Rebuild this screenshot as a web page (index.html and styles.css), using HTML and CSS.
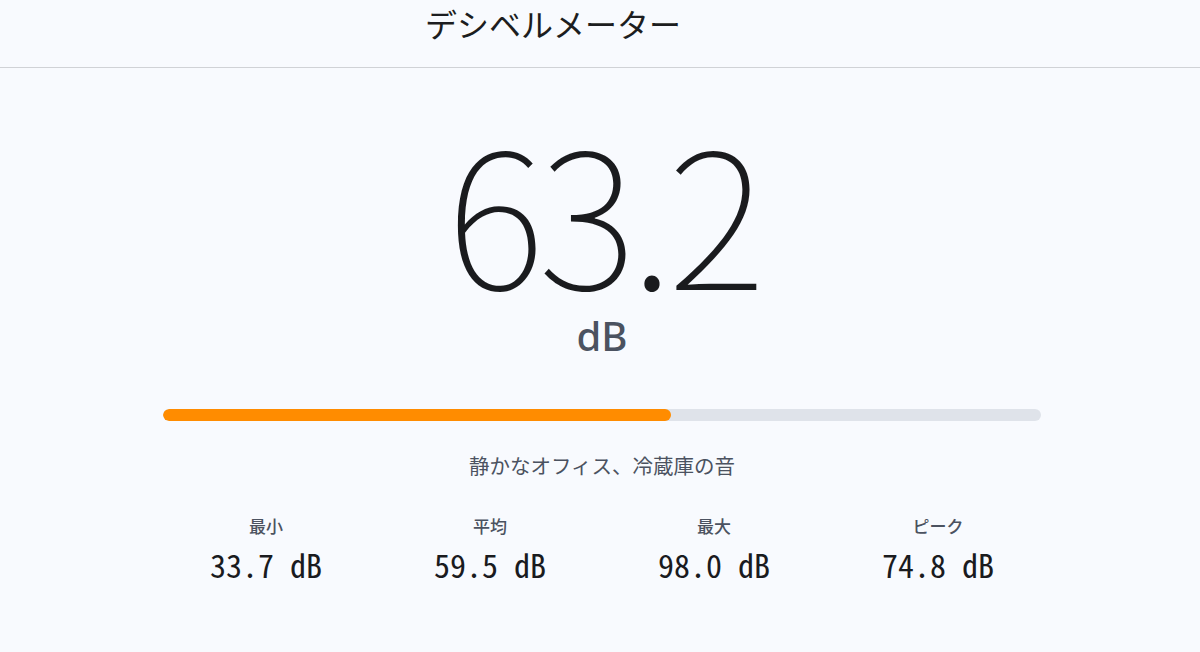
FILE: index.html
```html
<!DOCTYPE html>
<html lang="ja">
<head>
<meta charset="utf-8">
<title>デシベルメーター</title>
<link rel="stylesheet" href="styles.css">
</head>
<body>
<header class="app-header">
  <h1 class="app-title">デシベルメーター</h1>
</header>
<main class="meter">
  <div class="reading">
    <div class="reading-value">63.2</div>
    <div class="reading-unit">dB</div>
  </div>
  <div class="level-bar">
    <div class="level-fill" style="width: 57.9%"></div>
  </div>
  <p class="level-desc">静かなオフィス、冷蔵庫の音</p>
  <div class="stats">
    <div class="stat">
      <div class="stat-label">最小</div>
      <div class="stat-value">33.7 dB</div>
    </div>
    <div class="stat">
      <div class="stat-label">平均</div>
      <div class="stat-value">59.5 dB</div>
    </div>
    <div class="stat">
      <div class="stat-label">最大</div>
      <div class="stat-value">98.0 dB</div>
    </div>
    <div class="stat">
      <div class="stat-label">ピーク</div>
      <div class="stat-value">74.8 dB</div>
    </div>
  </div>
</main>
</body>
</html>
```
FILE: styles.css
```css
* { box-sizing: border-box; }
html, body {
  margin: 0;
  padding: 0;
  background: #f8fafe;
  color: #1f2023;
  font-family: "Noto Sans", "Noto Sans CJK JP", sans-serif;
}
.app-header {
  height: 68px;
  border-bottom: 1px solid #d0d2d6;
  padding-left: 425px;
}
.app-title {
  margin: 0;
  font-family: "Noto Sans CJK JP", sans-serif;
  font-weight: 400;
  font-size: 32px;
  line-height: 46px;
  color: #1c1d20;
}
.meter {
  width: 896px;
  margin: 0 auto;
  position: relative;
  left: 2px;
  display: flex;
  flex-direction: column;
  align-items: center;
}
.reading {
  display: flex;
  flex-direction: column;
  align-items: center;
  margin-top: 40px;
}
.reading-value {
  font-family: "Noto Sans CJK JP", sans-serif;
  font-weight: 100;
  font-size: 188px;
  line-height: 200px;
  letter-spacing: -6px;
  padding-left: 2px;
  color: #1a1b1e;
}
.reading-unit {
  margin-top: 3px;
  font-family: "Noto Sans", sans-serif;
  font-weight: 500;
  font-size: 40px;
  line-height: 50px;
  color: #4b5260;
}
.level-bar {
  align-self: stretch;
  margin: 48px 9px 0;
  height: 12px;
  border-radius: 6px;
  background: #dfe3ea;
  overflow: hidden;
}
.level-fill {
  height: 100%;
  border-radius: 6px;
  background: #ff8c00;
}
.level-desc {
  margin: 30px 0 0;
  font-family: "Noto Sans CJK JP", sans-serif;
  font-size: 20.5px;
  line-height: 28px;
  color: #4b5260;
}
.stats {
  align-self: stretch;
  display: grid;
  grid-template-columns: repeat(4, 1fr);
  margin-top: 35px;
}
.stat {
  display: flex;
  flex-direction: column;
  align-items: center;
}
.stat-label {
  font-family: "Noto Sans CJK JP", sans-serif;
  font-weight: 500;
  font-size: 17px;
  line-height: 24px;
  color: #4b5260;
}
.stat-value {
  font-family: "Noto Sans Mono CJK JP", monospace;
  font-size: 32px;
  line-height: 52px;
  color: #1a1b1e;
}
```
